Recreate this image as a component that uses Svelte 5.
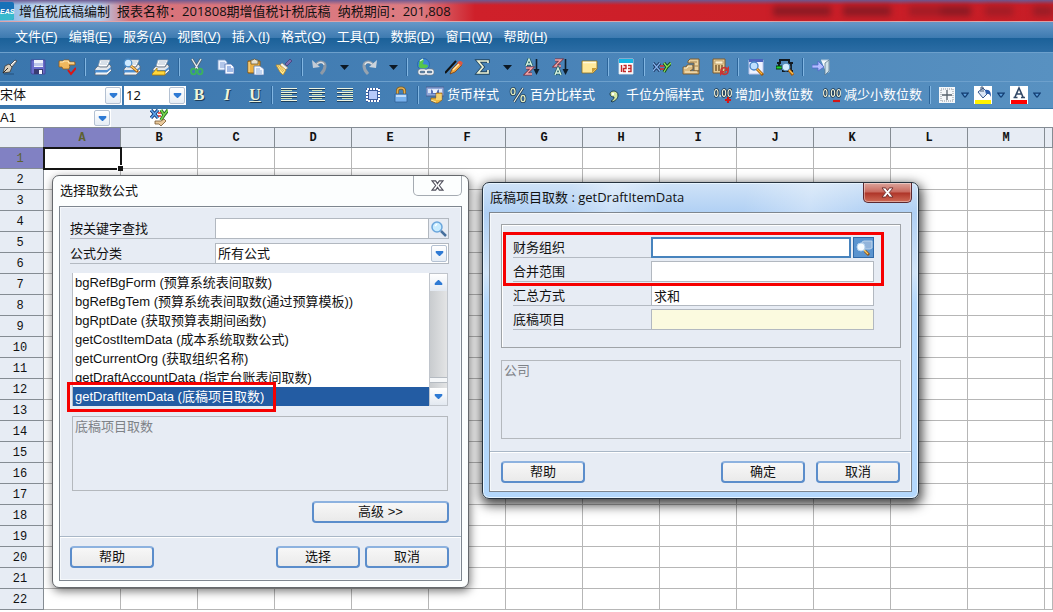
<script lang="ts">
  const MENUS = [
    { label: "文件", key: "F" },
    { label: "编辑", key: "E" },
    { label: "服务", key: "A" },
    { label: "视图", key: "V" },
    { label: "插入", key: "I" },
    { label: "格式", key: "O" },
    { label: "工具", key: "T" },
    { label: "数据", key: "D" },
    { label: "窗口", key: "W" },
    { label: "帮助", key: "H" },
  ];

  // "|" is a separator, "v" a small drop-down arrow
  const TOOLS = [
    "pen", "save", "submit", "|",
    "print", "preview", "setup", "|",
    "cut", "copy", "paste", "brush", "|",
    "undo", "v", "redo", "v", "|",
    "link", "pencil", "sum", "v", "asc", "desc", "note", "|",
    "calendar", "|",
    "formula", "batch", "calc", "|",
    "find", "balance", "|",
    "exit",
  ];
  const FORMATS = [
    "bold", "italic", "underline", "|",
    "left", "center", "right", "merge", "lock", "|",
  ];
  const NUMBER_STYLES = [
    { icon: "currency", label: "货币样式" },
    { icon: "percent", label: "百分比样式" },
    { icon: "comma", label: "千位分隔样式" },
    { icon: "more", label: "增加小数位数" },
    { icon: "less", label: "减少小数位数" },
  ];
  const PAINTS = ["border", "fill", "color"];

  const COLS = "ABCDEFGHIJKLM".split("");
  const ROWS = Array.from({ length: 22 }, (_, i) => i + 1);

  const FORMULAS = [
    "bgRefBgForm (预算系统表间取数)",
    "bgRefBgTem (预算系统表间取数(通过预算模板))",
    "bgRptDate (获取预算表期间函数)",
    "getCostItemData (成本系统取数公式)",
    "getCurrentOrg (获取组织名称)",
    "getDraftAccountData (指定台账表间取数)",
    "getDraftItemData (底稿项目取数)",
  ];

  let selected = $state(6);
  let keyword = $state("");
  let cellName = $state("A1");
  let org = $state("");
  let scope = $state("");
  let method = $state("求和");
  let item = $state("");
</script>

{#snippet icon(name: string)}
  <svg class="icon" viewBox="0 0 18 18" aria-hidden="true">
    {#if name === "pen"}
      <path d="M10 7l5-5 2 1-5 6z" fill="#d8d4cc" stroke="#3f4348" stroke-width=".8" />
      <path d="M3 15l2-7 4-2 3 3-2 5z" fill="#d9cfbd" stroke="#3c3a38" stroke-width=".8" />
      <path d="M3 15l5-5" stroke="#2a2622" />
      <path d="M11 7l4-4" stroke="#fff" />
      <path d="M4 16h10" stroke="#22507d" />
    {:else if name === "save"}
      <path d="M2 2h14v14H3l-1-1z" fill="#6a6dcb" stroke="#474b9c" />
      <path d="M5 2h9v7H5z" fill="#eef1fb" />
      <path d="M5 5h9v3H5z" fill="#bcc6ea" />
      <path d="M5 11h9v5H5z" fill="#3a3c72" />
      <path d="M10 12h3v4h-3z" fill="#f6f7ff" />
    {:else if name === "submit"}
      <path d="M1 3h4l1-1h5l1 2h5v3h-6l1 1-1 3H5L4 9H1z" fill="#f0b85e" stroke="#8f5a20" stroke-width=".8" />
      <path d="M2 4h3l1-1h4l1 2h5" fill="none" stroke="#ffe9b6" stroke-width="1.200" />
      <path d="M10 12l3 4 5-6" fill="none" stroke="#dc1414" stroke-width="2" />
    {:else if name === "print" || name === "preview" || name === "setup"}
      <path d="M6 2h10l-3 7H4z" fill="#fff" stroke="#98a6b4" stroke-width=".7" />
      <path d="M7 4h7M6 6h7" stroke="#9db1c7" stroke-width=".8" />
      <path d="M1 11l3-3 2 1h7l2-3 2 2v5l-4 4H1z" fill="#e4e8ec" stroke="#5a6a7c" stroke-width=".8" />
      <path d="M1 12h12l4-3v2l-4 4H1z" fill="#4f8fd0" />
      <path d="M2 15h11l4-3" fill="none" stroke="#fff" />
      {#if name === "preview"}
        <circle cx="5" cy="5" r="3.800" fill="#cfeaff" stroke="#4a8cc8" stroke-width="1.200" />
        <path d="M8 8l7 6" stroke="#a55c12" stroke-width="2.800" />
        <path d="M8 8l6 5" stroke="#ffd26b" stroke-width="1.200" />
      {:else if name === "setup"}
        <path d="M0 16l5-6v3h8v4H0z" fill="#ffd73c" stroke="#a87c08" stroke-width=".8" />
      {/if}
    {:else if name === "cut"}
      <path d="M4 1l6 10M13 1L7 11" stroke="#51606c" stroke-width="2.600" />
      <path d="M4 1l6 10M13 1L7 11" stroke="#e6ecf0" stroke-width="1.400" />
      <ellipse cx="5.500" cy="13.500" rx="2.500" ry="2.800" fill="none" stroke="#3cb35c" stroke-width="1.800" />
      <ellipse cx="12" cy="13.500" rx="2.500" ry="2.800" fill="none" stroke="#3cb35c" stroke-width="1.800" />
    {:else if name === "copy"}
      <path d="M1 2h7l2 2v8H1z" fill="#eaf2ff" stroke="#7e9cc8" stroke-width=".8" />
      <path d="M3 5h5M3 7h5M3 9h5" stroke="#7b9ad4" />
      <path d="M8 6h6l3 3v7H8z" fill="#f5f9ff" stroke="#5577b5" stroke-width=".8" />
      <path d="M10 9h4M10 11h6M10 13h6" stroke="#4f7dd0" />
    {:else if name === "paste"}
      <path d="M2 3h12v12H2z" fill="#edb042" stroke="#8f5c13" />
      <path d="M3 4v10" stroke="#ffe09a" />
      <path d="M5 2h2l1-1h1l1 1h2v4H5z" fill="#e9e2cf" stroke="#6b5b35" stroke-width=".8" />
      <path d="M8 8h6l4 3v6H8z" fill="#f4f8ff" stroke="#567ab0" stroke-width=".8" />
      <path d="M10 11h4M10 13h6M10 15h6" stroke="#8fb0e0" />
    {:else if name === "brush"}
      <path d="M15 1l2 2-5 5-2-2z" fill="#7a6cae" stroke="#3d3572" stroke-width=".7" />
      <path d="M7 5l6 5-3 2-6-4z" fill="#f4f1e8" stroke="#8d8674" stroke-width=".6" />
      <path d="M1 7l4 0 6 5-3 5-3-3z" fill="#ffe88c" stroke="#b88828" stroke-width=".8" />
      <path d="M3 8l5 6M5 8l4 5" stroke="#d0a040" stroke-width=".8" />
    {:else if name === "undo"}
      <path d="M5 7c4-5 9-3 9 1 0 3-2 6-4 8" fill="none" stroke="#8e99a6" stroke-width="3" />
      <path d="M6 6c4-3 7-1 7 1" fill="none" stroke="#dde2e8" stroke-width="1.200" />
      <path d="M1 2l1 8 7-1z" fill="#c4ccd6" />
    {:else if name === "redo"}
      <path d="M13 7C9 2 4 4 4 8c0 3 2 6 4 8" fill="none" stroke="#98a4b0" stroke-width="3" />
      <path d="M12 6C8 3 5 5 5 7" fill="none" stroke="#e2e6ea" stroke-width="1.200" />
      <path d="M17 2l-1 8-7-1z" fill="#ccd4dc" />
    {:else if name === "link"}
      <circle cx="7.500" cy="6.500" r="6" fill="#3b86d8" stroke="#1c5896" stroke-width=".6" />
      <path d="M3 4c3-5 6-2 4 1s5 0 5 3-8 3-9 1 1-2 0-5z" fill="#56c64a" />
      <path d="M4 3l3-2" stroke="#dfffd6" stroke-width="1.400" />
      <g fill="none" stroke="#6c7b8c" stroke-width="2.800">
        <rect x="3" y="12" width="7" height="4" rx="2" />
        <rect x="10" y="12" width="7" height="4" rx="2" />
      </g>
      <g fill="none" stroke="#f0f4f8" stroke-width="1.400">
        <rect x="3" y="12" width="7" height="4" rx="2" />
        <rect x="10" y="12" width="7" height="4" rx="2" />
      </g>
    {:else if name === "pencil"}
      <path d="M0 15L11 3" stroke="#111" stroke-width="2" />
      <path d="M5 16l2-5 7-7 3 3-7 7z" fill="#f0a63c" stroke="#7b3f14" stroke-width=".8" />
      <path d="M14 3h2l2 2-2 3-4-3z" fill="#dc5a44" />
      <path d="M8 12l6-6" stroke="#ffe9b4" stroke-width="1.200" />
    {:else if name === "sum"}
      <path d="M14 5V3H4l5 6-5 6h10v-3" fill="none" stroke="#23455f" stroke-width="3.400" />
      <path d="M14 5V3H4l5 6-5 6h10v-3" fill="none" stroke="#eef3d6" stroke-width="1.700" />
    {:else if name === "asc" || name === "desc"}
      {#if name === "asc"}
        <path d="M3 8l3-7 3 7M4 6h4" fill="none" stroke="#1f5a62" stroke-width="2.800" />
        <path d="M3 8l3-7 3 7M4 6h4" fill="none" stroke="#d6f3e0" stroke-width="1.300" />
        <path d="M3 10h6l-6 6h6" fill="none" stroke="#7a3340" stroke-width="2.800" />
        <path d="M3 10h6l-6 6h6" fill="none" stroke="#f3a8ac" stroke-width="1.300" />
      {:else}
        <path d="M3 2h6L3 8h6" fill="none" stroke="#7a3340" stroke-width="2.800" />
        <path d="M3 2h6L3 8h6" fill="none" stroke="#f3a8ac" stroke-width="1.300" />
        <path d="M3 17l3-7 3 7M4 15h4" fill="none" stroke="#1f5a62" stroke-width="2.800" />
        <path d="M3 17l3-7 3 7M4 15h4" fill="none" stroke="#d6f3e0" stroke-width="1.300" />
      {/if}
      <path d="M13.500 1v13" stroke="#0e1c2a" stroke-width="1.600" />
      <path d="M10.500 11h6l-3 6z" fill="#0e1c2a" />
    {:else if name === "note"}
      <path d="M1 3h15v8l-4 4H1z" fill="#ffe99b" stroke="#8d6e22" stroke-width=".8" />
      <path d="M11 15v-5h5z" fill="#c99c36" />
      <path d="M2 4.500h13" stroke="#fffbe0" stroke-width="1.500" />
    {:else if name === "calendar"}
      <path d="M2 1h14v15H2z" fill="#fff" stroke="#dfe6ee" stroke-width=".8" />
      <path d="M2 1h14v4H2z" fill="#13b6e4" />
      <path d="M4.500 7v7M6.500 7.500H9v3H6.500v3H9M11 7.500h3v6h-3M11 10.500h3" fill="none" stroke="#c02a2a" stroke-width="1.400" />
    {:else if name === "formula"}
      <path d="M0 5l7 8M7 5l-7 8" stroke="#1c3560" stroke-width="3.200" />
      <path d="M0 5l7 8M7 5l-7 8" stroke="#86b4ee" stroke-width="1.200" />
      <path d="M11 5l3 4 4-4M14 9l-3 5" fill="none" stroke="#164c18" stroke-width="3.200" />
      <path d="M11 5l3 4 4-4M14 9l-3 5" fill="none" stroke="#8ae05a" stroke-width="1.300" />
      <path d="M7 8h4M7 11h4" stroke="#e02424" stroke-width="1.600" />
    {:else if name === "batch"}
      <path d="M6 3l2-2h9v12h-5V5H6z" fill="#ecd3a0" stroke="#7c5c30" />
      <path d="M8 4h7M11 8h5" stroke="#a58450" />
      <path d="M1 9h3l1-2h6v4l-3 2h9v3H1z" fill="#dcbb80" stroke="#7c5c30" stroke-width=".9" />
      <path d="M2 10h3l1-2h4M3 14h12" fill="none" stroke="#fff0cc" />
    {:else if name === "calc"}
      <path d="M2 1h12v14H2z" fill="#e6ca92" stroke="#7c5c30" />
      <path d="M4 3h8v3H4z" fill="#fff3cf" stroke="#a58450" stroke-width=".6" />
      <path d="M4 8h8M4 10h8M4 12h8" stroke="#7c5c30" stroke-width="1.300" stroke-dasharray="2 1" />
      <path d="M10 13c0-4 5-4 6-2M17 13c0 4-5 4-6 2" fill="none" stroke="#c93434" stroke-width="1.700" />
      <path d="M18 8v5h-5zM9 18v-5h5z" fill="#c93434" />
    {:else if name === "find"}
      <path d="M2 2h14v14H2z" fill="#eff3ff" stroke="#b9c4ea" />
      <path d="M2 1h14v3H2z" fill="#4c64bd" />
      <circle cx="7" cy="8" r="4" fill="#bfe0ff" stroke="#4a86c8" stroke-width="1.400" />
      <path d="M10 11l6 6" stroke="#9c580d" stroke-width="3" />
      <path d="M10 11l5 5" stroke="#ffb737" stroke-width="1.300" />
    {:else if name === "balance"}
      <path d="M1 5h3V2h9v3h4" fill="none" stroke="#12191f" stroke-width="2" />
      <path d="M3 5v3M15 5v8" stroke="#12191f" stroke-width="1.800" />
      <path d="M0 8h6v3H0z" fill="#1dd62d" stroke="#082e0b" />
      <path d="M6 13h11" stroke="#12191f" stroke-width="2" />
      <circle cx="10" cy="9" r="3.800" fill="#d3ecff" stroke="#568bba" stroke-width="1.200" />
      <path d="M13 12l4 5" stroke="#a75b0f" stroke-width="3" />
      <path d="M13 12l4 4" stroke="#ffc14c" stroke-width="1.200" />
    {:else if name === "exit"}
      <path d="M9 2h8v12h-3" fill="#f3f8fb" stroke="#b4cadb" />
      <path d="M17 2l-4 3v12l4-4z" fill="#cfe2ea" stroke="#5c7a90" stroke-width=".8" />
      <path d="M0 7h6V3l6 6-6 4v-3H0z" fill="#b2bdff" stroke="#5468cc" stroke-width=".8" />
    {:else if name === "left" || name === "center" || name === "right"}
      <path d="M1 3.500h16M1 7.500h16M1 11.500h16M1 15.500h16" stroke="#1d3f5c" />
      <path d="M1 2.500h16M1 6.500h16M1 10.500h16M1 14.500h16" stroke="#f0f5e2" />
      {#if name === "left"}
        <path d="M1 4.500h11M1 8.500h11M1 12.500h11" stroke="#cfe4b8" />
      {:else if name === "center"}
        <path d="M4 4.500h10M4 8.500h10M4 12.500h10" stroke="#cfe4b8" />
      {:else}
        <path d="M6 4.500h11M6 8.500h11M6 12.500h11" stroke="#cfe4b8" />
      {/if}
    {:else if name === "merge"}
      <path d="M2 2h14v14H2z" fill="#3a5a9c" />
      <path d="M3 3h12v12H3z" fill="none" stroke="#fff" stroke-width="2" stroke-dasharray="2 1" />
      <path d="M5 5h8v8H5z" fill="#b7c9fa" />
    {:else if name === "lock"}
      <path d="M5.500 9V5c0-4 7-4 7 0v4" fill="none" stroke="#7d5a1c" stroke-width="3" />
      <path d="M5.500 9V5c0-4 7-4 7 0v4" fill="none" stroke="#e0ae54" stroke-width="1.600" />
      <path d="M3 8h12v8H3z" fill="#78b2ee" stroke="#315f94" stroke-width=".8" />
      <path d="M4 9h10v2H4z" fill="#c3defa" />
    {:else if name === "currency"}
      <path d="M0 1h18v9H0z" fill="#8ea6d8" stroke="#42588c" stroke-width=".8" />
      <path d="M2 3h14v4H2z" fill="#dce6f8" />
      <path d="M5 3c2 3 6 3 8 0v5H5z" fill="#5874b8" />
      <path d="M7 4h4v3H7z" fill="#eef4ff" />
      <path d="M10 7h6v7l-4 3h-2l-5-2v-3h5z" fill="#edb840" stroke="#8c5815" stroke-width=".7" />
      <path d="M10 9h6M10 11h6M10 13h6M5 14l5 2" stroke="#fff0ad" stroke-width=".9" />
    {:else if name === "percent"}
      <path d="M14 2L5 16" stroke="#1a3854" stroke-width="2.600" />
      <g fill="none" stroke="#1a3854" stroke-width="2.600">
        <ellipse cx="4" cy="5.500" rx="2" ry="3.200" />
        <ellipse cx="14" cy="12.500" rx="2" ry="3.200" />
      </g>
      <path d="M14 2L5 16" stroke="#f3f5e2" stroke-width="1.200" />
      <g fill="none" stroke="#e6f0c4" stroke-width="1.300">
        <ellipse cx="4" cy="5.500" rx="2" ry="3.200" />
        <ellipse cx="14" cy="12.500" rx="2" ry="3.200" />
      </g>
    {:else if name === "comma"}
      <path d="M5 8c0-4 8-4 8 1 0 4-3 6-6 7l-1-1c2-1 3-2 3-4-2 0-4-1-4-3z" fill="#d6eaa4" stroke="#193b4e" />
      <circle cx="8" cy="8" r="1.200" fill="#fff" />
    {:else if name === "more" || name === "less"}
      <g fill="none" stroke="#172f46" stroke-width="2.600">
        <ellipse cx="2.300" cy="7" rx="1.700" ry="3.500" />
        <ellipse cx="10" cy="7" rx="1.700" ry="3.500" />
        <ellipse cx="15.700" cy="7" rx="1.700" ry="3.500" />
      </g>
      <g fill="none" stroke="#f3f5dc" stroke-width="1.100">
        <ellipse cx="2.300" cy="7" rx="1.700" ry="3.500" />
        <ellipse cx="10" cy="7" rx="1.700" ry="3.500" />
        <ellipse cx="15.700" cy="7" rx="1.700" ry="3.500" />
      </g>
      <path d="M5.500 10H7" stroke="#f3f5dc" stroke-width="1.500" />
      <path d={name === "more" ? "M11 14h6M14 11v6" : "M10 15h7"} stroke="#d41616" stroke-width="2.200" />
    {:else if name === "border"}
      <path d="M1 1h16v16H1z" fill="#f4f7fa" />
      <path d="M3 3h12v12H3z" fill="none" stroke="#8a929a" stroke-dasharray="1 1" />
      <path d="M9 4v10M4 9h10" stroke="#56616c" stroke-width="1.300" />
    {:else if name === "fill"}
      <path d="M0 0h18v18H0z" fill="#fff" />
      <path d="M4 6l5-4 5 5-5 5z" fill="#dbe6f6" stroke="#36588e" />
      <path d="M7 6V1h2v5" fill="none" stroke="#465a78" />
      <path d="M11 4c5-1 6 2 6 7-1-3-3-4-5-3z" fill="#2b5cab" />
      <path d="M1 14h16v4H1z" fill="#fff200" />
    {:else if name === "color"}
      <path d="M0 0h18v18H0z" fill="#fff" />
      <path d="M5 11L9 2l4 9M6.500 8h5M3.500 11.500h4M11 11.500h4" fill="none" stroke="#314766" stroke-width="1.600" />
      <path d="M1 14h16v4H1z" fill="#f00" />
    {:else if name === "fx"}
      <path d="M1 1l7 8M8 1L1 9" stroke="#153b7b" stroke-width="3.400" />
      <path d="M1 1l7 8M8 1L1 9" stroke="#60a6eb" stroke-width="1.500" />
      <path d="M11 1l3 5 4-5M14 6l-3 5" fill="none" stroke="#236d20" stroke-width="3.400" />
      <path d="M11 1l3 5 4-5M14 6l-3 5" fill="none" stroke="#7ad64d" stroke-width="1.500" />
      <path d="M8 4h3M8 7h3" stroke="#e12b25" stroke-width="1.500" />
      <path d="M5 12h6l3-2 2 2-5 5-2-2H5z" fill="#eac99b" stroke="#765832" stroke-width=".8" />
    {:else if name === "search"}
      <circle cx="7" cy="7" r="5" fill="#c9ecff" stroke="#6ba6dc" stroke-width="1.500" />
      <path d="M5 6l2-2" stroke="#fff" stroke-width="1.500" />
      <path d="M11 11l5 5" stroke="#47709d" stroke-width="2.500" />
    {:else if name === "lookup"}
      <path d="M7 3l2-1h8v7l-2 1H7z" fill="#91b4db" stroke="#c9dcf0" stroke-width=".8" />
      <circle cx="6" cy="8" r="4" fill="#f5fbff" stroke="#b5d3ee" />
      <path d="M10 12l4 4" stroke="#8d551b" stroke-width="3" />
      <path d="M9 11l4 4" stroke="#ffcb5e" stroke-width="1.300" />
    {/if}
  </svg>
{/snippet}

{#snippet arrow()}
  <span class="arrow">
    <svg viewBox="0 0 9 6" aria-hidden="true"><path d="M0 0h9v2L5 6H4L0 2z" fill="#2e7ad4" /></svg>
  </span>
{/snippet}

{#snippet tool(name: string)}
  {#if name === "|"}
    <span class="sep"></span>
  {:else if name === "v"}
    <button class="drop" aria-label="more">
      <svg viewBox="0 0 9 5" aria-hidden="true"><path d="M0 0h9L4.500 5z" fill="#0c1824" /></svg>
    </button>
  {:else if name === "bold"}
    <button class="tool glyph" aria-label={name}><b>B</b></button>
  {:else if name === "italic"}
    <button class="tool glyph" aria-label={name}><i>I</i></button>
  {:else if name === "underline"}
    <button class="tool glyph" aria-label={name}><u>U</u></button>
  {:else}
    <button class="tool" aria-label={name}>{@render icon(name)}</button>
  {/if}
{/snippet}

<div class="app">
  <header class="titlebar">
    <svg class="logo" viewBox="0 0 14 18" aria-hidden="true">
      <rect x="-4" width="18" height="18" rx="2" fill="#1771b8" />
      <path d="M-4 13c6-4 12-1 18-5v8c0 1-1 2-2 2H-4z" fill="#38b9cd" />
      <text x="0" y="12" class="logo-text">EAS</text>
    </svg>
    <span>增值税底稿编制</span>
    <span>报表名称：201808期增值税计税底稿</span>
    <span>纳税期间：201,808</span>
    <span class="ghost"></span>
  </header>

  <nav class="menubar">
    {#each MENUS as menu}
      <button>{menu.label}(<u>{menu.key}</u>)</button>
    {/each}
  </nav>

  <div class="toolbar">
    {#each TOOLS as name}
      {@render tool(name)}
    {/each}
  </div>

  <div class="toolbar format">
    <div class="combo font">
      <select aria-label="字体"><option>宋体</option></select>
      {@render arrow()}
    </div>
    <div class="combo size">
      <select aria-label="字号"><option>12</option></select>
      {@render arrow()}
    </div>
    {#each FORMATS as name}
      {@render tool(name)}
    {/each}
    {#each NUMBER_STYLES as style}
      <button class="labelled">{@render icon(style.icon)}{style.label}</button>
    {/each}
    <span class="sep"></span>
    <div class="paints">
      {#each PAINTS as name}
        <button class="tool" aria-label={name}>{@render icon(name)}</button>
        <button class="drop" aria-label="{name} options">
          <svg viewBox="0 0 9 6" aria-hidden="true">
            <path d="M1 1h7L5 5H4z" fill="#5da0dc" stroke="#123d72" stroke-width="1.400" />
          </svg>
        </button>
      {/each}
    </div>
  </div>

  <div class="cellbar">
    <div class="combo name">
      <input aria-label="单元格" bind:value={cellName} />
      {@render arrow()}
    </div>
    <span class="gap"></span>
    <button class="tool" aria-label="公式向导">{@render icon("fx")}</button>
    <input class="formula" aria-label="公式" />
  </div>

  <main class="sheet">
    <table>
      <thead>
        <tr>
          <th class="corner"></th>
          {#each COLS as col}
            <th class="col" class:current={col === "A"}>{col}</th>
          {/each}
          <th></th>
        </tr>
      </thead>
      <tbody>
        {#each ROWS as row}
          <tr>
            <th class:current={row === 1}>{row}</th>
            {#each COLS as col}
              <td class:active={row === 1 && col === "A"}></td>
            {/each}
            <td></td>
          </tr>
        {/each}
      </tbody>
    </table>
  </main>

  <section class="dialog picker" role="dialog" aria-label="选择取数公式">
    <div class="caption">
      <h2>选择取数公式</h2>
      <button class="close" aria-label="关闭">
        <svg viewBox="0 0 14 12" aria-hidden="true">
          <path d="M1 1h4l2 3 2-3h4l-4 5 4 5H9L7 8l-2 3H1l4-5z" fill="#fff" stroke="#50505c" stroke-width="1.200" />
        </svg>
      </button>
    </div>
    <div class="body">
      <div class="pane">
        <div class="field">
          <label for="keyword">按关键字查找</label>
          <input id="keyword" bind:value={keyword} />
          <button class="search" aria-label="查找">{@render icon("search")}</button>
        </div>
        <div class="field">
          <label for="category">公式分类</label>
          <div class="combo">
            <select id="category"><option>所有公式</option></select>
            {@render arrow()}
          </div>
        </div>
        <div class="listwrap">
          <div class="list" role="listbox" aria-label="公式" tabindex="-1">
            {#each FORMULAS as formula, i}
              <button
                role="option"
                aria-selected={i === selected}
                class:selected={i === selected}
                onclick={() => (selected = i)}>{formula}</button
              >
            {/each}
          </div>
          <div class="scroll">
            <button aria-label="向上">
              <svg viewBox="0 0 9 6" aria-hidden="true"><path d="M0 6h9V4L5 0H4L0 4z" fill="#2e7ad4" /></svg>
            </button>
            <span class="track"><span class="thumb"></span></span>
            <button aria-label="向下">
              <svg viewBox="0 0 9 6" aria-hidden="true"><path d="M0 0h9v2L5 6H4L0 2z" fill="#2e7ad4" /></svg>
            </button>
          </div>
          <span class="mark"></span>
        </div>
        <textarea aria-label="说明" readonly>底稿项目取数</textarea>
        <div class="more"><button class="btn wide">高级 &gt;&gt;</button></div>
      </div>
      <footer>
        <button class="btn help">帮助</button>
        <button class="btn">选择</button>
        <button class="btn">取消</button>
      </footer>
    </div>
  </section>

  <section class="dialog params" role="dialog" aria-label="底稿项目取数">
    <div class="caption">
      <h2>底稿项目取数 : getDraftItemData</h2>
      <button class="close" aria-label="关闭">
        <svg viewBox="0 0 14 12" aria-hidden="true">
          <path d="M1 1h4l2 3 2-3h4l-4 5 4 5H9L7 8l-2 3H1l4-5z" fill="#fff" stroke="#6b2c2c" />
        </svg>
      </button>
    </div>
    <div class="body">
      <div class="pane">
        <div class="group">
          <div class="field">
            <label for="org">财务组织</label>
            <input id="org" class="focus" bind:value={org} />
            <button class="lookup" aria-label="选择组织">{@render icon("lookup")}</button>
          </div>
          <div class="field">
            <label for="scope">合并范围</label>
            <input id="scope" bind:value={scope} />
          </div>
          <div class="field">
            <label for="method">汇总方式</label>
            <input id="method" bind:value={method} />
          </div>
          <div class="field">
            <label for="item">底稿项目</label>
            <input id="item" class="required" bind:value={item} />
          </div>
          <span class="mark"></span>
        </div>
        <textarea aria-label="说明" readonly>公司</textarea>
      </div>
      <footer>
        <button class="btn help">帮助</button>
        <button class="btn">确定</button>
        <button class="btn">取消</button>
      </footer>
    </div>
  </section>
</div>

<style>
  :global(body) {
    margin: 0;
  }

  .app {
    position: relative;
    display: flex;
    flex-direction: column;
    height: 100vh;
    overflow: hidden;
    background: #fff;
    color: #111;
    font-family: "Liberation Sans", "Noto Sans CJK SC", sans-serif;
    font-size: 13px;
    line-height: 18px;
  }

  .app * {
    box-sizing: border-box;
  }

  button,
  input,
  select,
  textarea {
    margin: 0;
    padding: 0;
    border: 0;
    border-radius: 0;
    background: none;
    color: inherit;
    font: inherit;
  }

  .icon {
    display: block;
    flex: none;
    width: 18px;
    height: 18px;
  }

  /* window chrome */
  .titlebar {
    display: flex;
    align-items: center;
    height: 22px;
    flex: none;
    border-bottom: 1px solid #e0a4a8;
    white-space: nowrap;
    font-family: "Open Sans", "Noto Sans CJK SC", sans-serif;
    background:
      linear-gradient(#6c5a92, transparent 5px),
      linear-gradient(90deg, #7fb0e0 0, #c2d8f2 40px, #b7cbe9 100px, #d8727a 130px, #dc7c82 420px, #cf202a 475px, #c71d26 100%);
  }

  .titlebar span {
    margin-right: 7px;
  }

  .logo {
    width: 14px;
    height: 18px;
    margin-right: 5px;
    overflow: visible;
  }

  .logo-text {
    fill: #fff;
    font: italic bold 7px "Liberation Sans", sans-serif;
  }

  .titlebar .ghost {
    width: 280px;
    height: 10px;
    margin: 0 0 0 auto;
    filter: blur(3px);
    background: linear-gradient(
      90deg,
      #8c1a24 0 58px,
      transparent 58px 70px,
      #8c1a24 70px 118px,
      transparent 118px 136px,
      #a31c26 136px 165px,
      #8c1a24 170px 198px,
      transparent 198px 212px,
      #a31c26 212px 240px,
      transparent 240px 260px,
      #9a1c26 260px
    );
  }

  .menubar {
    display: flex;
    align-items: center;
    gap: 11px;
    flex: none;
    height: 30px;
    padding: 0 15px;
    color: #fff;
    background: linear-gradient(#6798c8, #3e7bb1 52%, #1b6199 54%, #2c6da5);
  }

  .menubar button {
    white-space: nowrap;
  }

  .toolbar {
    display: flex;
    align-items: center;
    gap: 11px;
    flex: none;
    height: 29px;
    border-top: 1px solid #6da0cc;
    color: #fff;
    background: linear-gradient(90deg, #3a76ad, #4882b7 50%, #5891c1);
  }

  .toolbar.format {
    gap: 10px;
    height: 28px;
    border-bottom: 1px solid #3b79ac;
  }

  .tool {
    display: flex;
    align-items: center;
    justify-content: center;
    flex: none;
    width: 18px;
    height: 18px;
  }

  .glyph {
    color: #eef4dc;
    font-family: "Liberation Serif", serif;
    font-size: 16px;
    font-weight: bold;
    text-shadow: 1px 1px #1c3c58;
  }

  .sep {
    flex: none;
    width: 2px;
    height: 18px;
    margin: 0 -3px;
    border-left: 1px solid #2c659a;
    border-right: 1px solid #82b6e2;
  }

  .drop {
    display: flex;
    flex: none;
    width: 9px;
  }

  .drop svg {
    width: 9px;
    height: 5px;
  }

  .labelled {
    display: flex;
    align-items: center;
    gap: 3px;
    white-space: nowrap;
  }

  .paints {
    display: flex;
    align-items: center;
    gap: 5px;
  }

  .paints .drop {
    width: 8px;
  }

  .paints .drop svg {
    height: 6px;
  }

  /* combos */
  .combo {
    position: relative;
    display: flex;
    height: 19px;
    background: #fff;
    color: #111;
  }

  .combo select,
  .combo input {
    flex: 1;
    min-width: 0;
    padding: 0 2px;
    appearance: none;
    outline: none;
  }

  .arrow {
    position: absolute;
    top: 1px;
    right: 1px;
    bottom: 1px;
    display: flex;
    align-items: center;
    justify-content: center;
    width: 16px;
    border: 1px solid #b4c1d2;
    border-radius: 2px;
    background: linear-gradient(#fff, #e6edf5);
    pointer-events: none;
  }

  .arrow svg {
    width: 9px;
    height: 5px;
  }

  .font {
    width: 122px;
    margin-right: -8px;
  }

  .combo.font select {
    padding: 0;
  }

  .size {
    width: 62px;
    margin-right: -6px;
    font-family: "Noto Sans", sans-serif;
  }

  .cellbar {
    display: flex;
    align-items: center;
    flex: none;
    height: 18px;
    background: #fff;
  }

  .combo.name {
    width: 111px;
    height: 18px;
  }

  .combo.name input {
    padding: 0;
  }

  .gap {
    width: 39px;
    height: 18px;
    background: #e7ecf4;
  }

  .formula {
    flex: 1;
    outline: none;
  }

  /* sheet */
  .sheet {
    flex: 1;
    min-height: 0;
    overflow: hidden;
    border-top: 1px solid #848c94;
  }

  table {
    width: 100%;
    table-layout: fixed;
    border-collapse: separate;
    border-spacing: 0;
  }

  tr {
    height: 21px;
  }

  thead tr {
    height: 20px;
  }

  th,
  td {
    padding: 0;
    border-right: 1px solid #b6b6b6;
    border-bottom: 1px solid #b6b6b6;
  }

  th {
    border-color: #858c93;
    background: #e7ecf4;
    font: 12px/18px "Liberation Mono", monospace;
  }

  thead th {
    font-weight: bold;
  }

  .corner {
    width: 44px;
  }

  .col {
    width: 77px;
  }

  tbody th {
    padding: 1px 3px 0 0;
  }

  th.current {
    background: #8181c3;
    color: #5d6130;
  }

  td.active {
    position: relative;
    outline: 2px solid #151515;
    outline-offset: -1px;
  }

  td.active::after {
    position: absolute;
    right: -3px;
    bottom: -3px;
    width: 5px;
    height: 5px;
    border: 1px solid #fff;
    border-width: 1px 0 0 1px;
    background: #151515;
    content: "";
  }

  /* dialogs */
  .dialog {
    position: absolute;
    padding: 0 6px 6px;
    border: 1px solid #66696d;
    border-radius: 7px;
  }

  .picker {
    top: 175px;
    left: 52px;
    width: 417px;
    background: #fcfefe;
    box-shadow: 1px 3px 10px rgba(0, 0, 0, 0.55);
  }

  .params {
    top: 182px;
    left: 482px;
    width: 437px;
    border-color: #26323e;
    background:
      linear-gradient(100deg, transparent 20%, rgba(255, 255, 255, 0.35) 30%, transparent 42%, transparent 60%, rgba(255, 255, 255, 0.3) 75%, transparent 90%) 0 0 / 100% 30px no-repeat,
      linear-gradient(#cfe2f7, #b0d0f4 30px, #d2e5f8 90px, #b4d8fc 120px);
    box-shadow:
      inset 0 0 0 1px #e6f4ff,
      1px 4px 12px 2px rgba(0, 0, 0, 0.75);
  }

  .caption {
    display: flex;
    align-items: center;
    justify-content: space-between;
    height: 30px;
  }

  .params .caption {
    height: 29px;
  }

  h2 {
    margin: 0;
    padding: 0 0 2px 1px;
    font: 13px/18px "Open Sans", "Noto Sans CJK SC", sans-serif;
  }

  .close {
    display: flex;
    align-items: center;
    justify-content: center;
    align-self: flex-start;
    width: 49px;
    height: 20px;
    border: 1px solid #a5abb2;
    border-top: 0;
    border-radius: 0 0 5px 5px;
  }

  .close svg {
    width: 13px;
    height: 11px;
  }

  .params .close {
    border-color: #5b2830;
    background: linear-gradient(#dda59c, #c8685d 48%, #ae3428 52%, #cf6a56);
    box-shadow: inset 0 0 0 1px rgba(255, 255, 255, 0.4);
  }

  .body {
    border: 1px solid #7e868f;
    background: #e7ecf4;
    box-shadow: inset 0 0 0 1px #f5f8fb;
  }

  .picker .pane {
    padding: 11px 12px 13px 10px;
  }

  .field {
    display: flex;
    height: 21px;
  }

  .picker .field {
    margin-bottom: 4px;
  }

  .field label {
    flex: 0 0 145px;
    padding-top: 2px;
    border-bottom: 1px solid #b4bac2;
  }

  .field input,
  .field .combo {
    flex: 1;
    min-width: 0;
    height: 21px;
    padding: 0 2px;
    border: 1px solid #b2b8c0;
    background: #fff;
    outline: none;
  }

  .field .combo {
    padding: 0;
  }

  .search {
    display: flex;
    align-items: center;
    justify-content: center;
    width: 20px;
    border: 1px solid #b2b8c0;
    border-left: 0;
  }

  .listwrap {
    position: relative;
    display: flex;
    margin: 9px 1px 0 2px;
  }

  .list {
    display: flex;
    flex: 1;
    flex-direction: column;
    border-left: 1px solid #b9bec5;
    background: #fff;
  }

  .list button {
    height: 19px;
    padding: 0 2px;
    text-align: left;
    white-space: nowrap;
  }

  .list .selected {
    background: #235ca3;
    color: #fff;
  }

  .scroll {
    display: flex;
    flex-direction: column;
    width: 19px;
    border: 1px solid #c0c5cc;
    background: #d6d8da;
  }

  .scroll button {
    display: flex;
    align-items: center;
    justify-content: center;
    height: 17px;
    background: linear-gradient(#fff, #e3e9f1);
  }

  .scroll svg {
    width: 9px;
    height: 5px;
  }

  .track {
    display: flex;
    flex: 1;
    align-items: flex-end;
    padding-bottom: 5px;
    background: linear-gradient(90deg, #c9cccf, #e3e4e5);
  }

  .thumb {
    width: 100%;
    height: 6px;
    border: 1px solid #b5bbc2;
    border-width: 1px 0;
    background: #f5f7f9;
  }

  .mark {
    position: absolute;
    border: 3px solid #f60000;
    pointer-events: none;
  }

  .picker .mark {
    bottom: -6px;
    left: -5px;
    width: 209px;
    height: 30px;
  }

  textarea {
    display: block;
    width: 100%;
    height: 79px;
    padding: 1px 2px;
    border: 1px solid #b4b8bd;
    color: #7e8287;
    line-height: 18px;
    resize: none;
    outline: none;
  }

  .picker textarea {
    width: auto;
    min-width: calc(100% - 3px);
    height: 75px;
    margin: 10px 1px 10px 2px;
  }

  .more {
    display: flex;
    justify-content: flex-end;
  }

  .btn {
    width: 84px;
    height: 22px;
    border: 2px solid #5b8dcb;
    border-top-color: #8db2df;
    border-radius: 4px;
    background: linear-gradient(#f7f7f7, #eaeaea);
    line-height: 18px;
  }

  .wide {
    width: 137px;
  }

  footer {
    display: flex;
    gap: 5px;
    padding: 9px 12px 12px 10px;
    border-top: 1px solid #a9b7c6;
    box-shadow: inset 0 1px #fff;
  }

  .help {
    margin-right: auto;
  }

  .params .pane {
    padding: 11px 10px 12px 11px;
  }

  .group {
    position: relative;
    display: flex;
    flex-direction: column;
    gap: 3px;
    margin-bottom: 12px;
    padding: 12px 26px 17px 11px;
    border: 1px solid #9fa3a7;
    box-shadow: inset 1px 1px #fff;
  }

  .params .field label {
    flex-basis: 138px;
  }

  .field .focus {
    border: 2px solid #4783bd;
  }

  .field .required {
    background: #fbfadf;
  }

  .lookup {
    display: flex;
    align-items: center;
    justify-content: center;
    width: 21px;
    margin-left: 2px;
    border: 1px solid #2f69a8;
    background: #5b94cf;
  }

  .params .mark {
    top: 7px;
    left: 1px;
    right: 16px;
    height: 54px;
  }

  .params footer {
    gap: 11px;
    padding: 9px 11px 8px;
  }
</style>
